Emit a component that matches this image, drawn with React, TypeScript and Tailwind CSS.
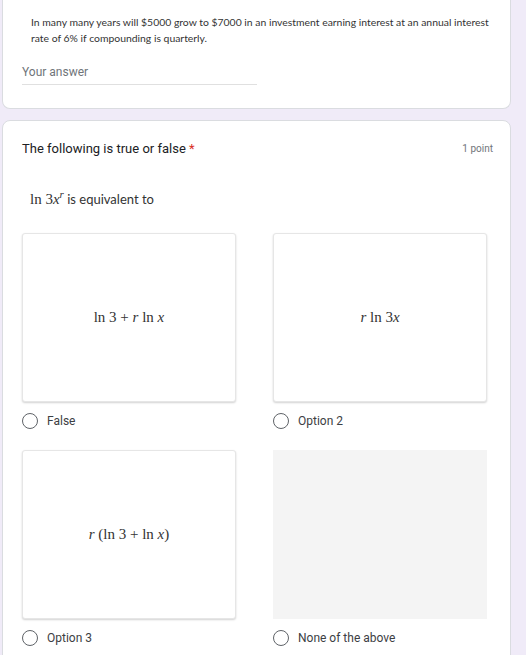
import React from "react";

type Option = {
  label: string;
  math?: React.ReactNode;
};

const serif = "font-['Liberation_Serif','Times_New_Roman',serif]";

function Radio() {
  return <span className="inline-block h-4 w-4 shrink-0 rounded-full border-[1.5px] border-[#5f6368]" />;
}

function OptionCell({ label, math }: Option) {
  return (
    <div className="flex flex-col">
      {math ? (
        <div className="flex h-[169px] items-center justify-center rounded-[3px] border border-[#e6e6e6] bg-white shadow-[0_1px_2px_rgba(0,0,0,0.18)]">
          <span className={`${serif} text-[15px] text-[#333]`}>{math}</span>
        </div>
      ) : (
        <div className="h-[169px] bg-[#f4f4f4]" />
      )}
      <div className="flex h-[37px] items-center gap-[9px] pt-px">
        <Radio />
        <span className="font-['Roboto',sans-serif] text-[12px] text-[#3c4043]">{label}</span>
      </div>
    </div>
  );
}

export default function App() {
  const options: Option[] = [
    {
      label: "False",
      math: (
        <>
          ln 3 + <i>r</i> ln <i>x</i>
        </>
      ),
    },
    {
      label: "Option 2",
      math: (
        <>
          <i>r</i> ln 3<i>x</i>
        </>
      ),
    },
    {
      label: "Option 3",
      math: (
        <>
          <i>r</i> (ln 3 + ln <i>x</i>)
        </>
      ),
    },
    { label: "None of the above" },
  ];

  return (
    <div className="h-[655px] w-[526px] overflow-hidden bg-[#f0ebf8] pl-[2px] pr-[15px]">
      {/* previous question, top cut off */}
      <div className="rounded-b-lg border border-t-0 border-[#dadce0] bg-white pb-[23px] pt-[14px]">
        <p className="whitespace-nowrap pl-[28px] font-['Lato',sans-serif] text-[10.4px] leading-[16px] text-[#333]">
          In many many years will $5000 grow to $7000 in an investment earning interest at an annual interest
          <br />
          rate of 6% if compounding is quarterly.
        </p>
        <div className="ml-[19px] mt-[17px] w-[235px] border-b border-[#e0e0e0] pb-[3px] font-['Roboto',sans-serif] text-[12px] text-[#70757a]">
          Your answer
        </div>
      </div>

      {/* current question */}
      <div className="mt-[11px] rounded-lg border border-[#dadce0] bg-white pb-6 pl-[19px] pr-[17px] pt-[18px]">
        <div className="flex items-center justify-between">
          <span className="font-['Roboto',sans-serif] text-[13px] text-[#202124]">
            The following is true or false <span className="text-[#d93025]">*</span>
          </span>
          <span className="font-['Roboto',sans-serif] text-[10px] text-[#70757a]">1 point</span>
        </div>

        <div className="mt-[27px] pl-[8px] text-[#333]">
          <span className={`${serif} text-[15px]`}>
            ln 3<i>x</i>
            <sup className="text-[11px]">
              <i>r</i>
            </sup>
          </span>
          <span className="font-['Lato',sans-serif] text-[13px]"> is equivalent to</span>
        </div>

        <div className="mt-[23px] grid grid-cols-[214px_214px] gap-x-[37px] gap-y-[11px]">
          {options.map((o) => (
            <OptionCell key={o.label} {...o} />
          ))}
        </div>
      </div>
    </div>
  );
}
